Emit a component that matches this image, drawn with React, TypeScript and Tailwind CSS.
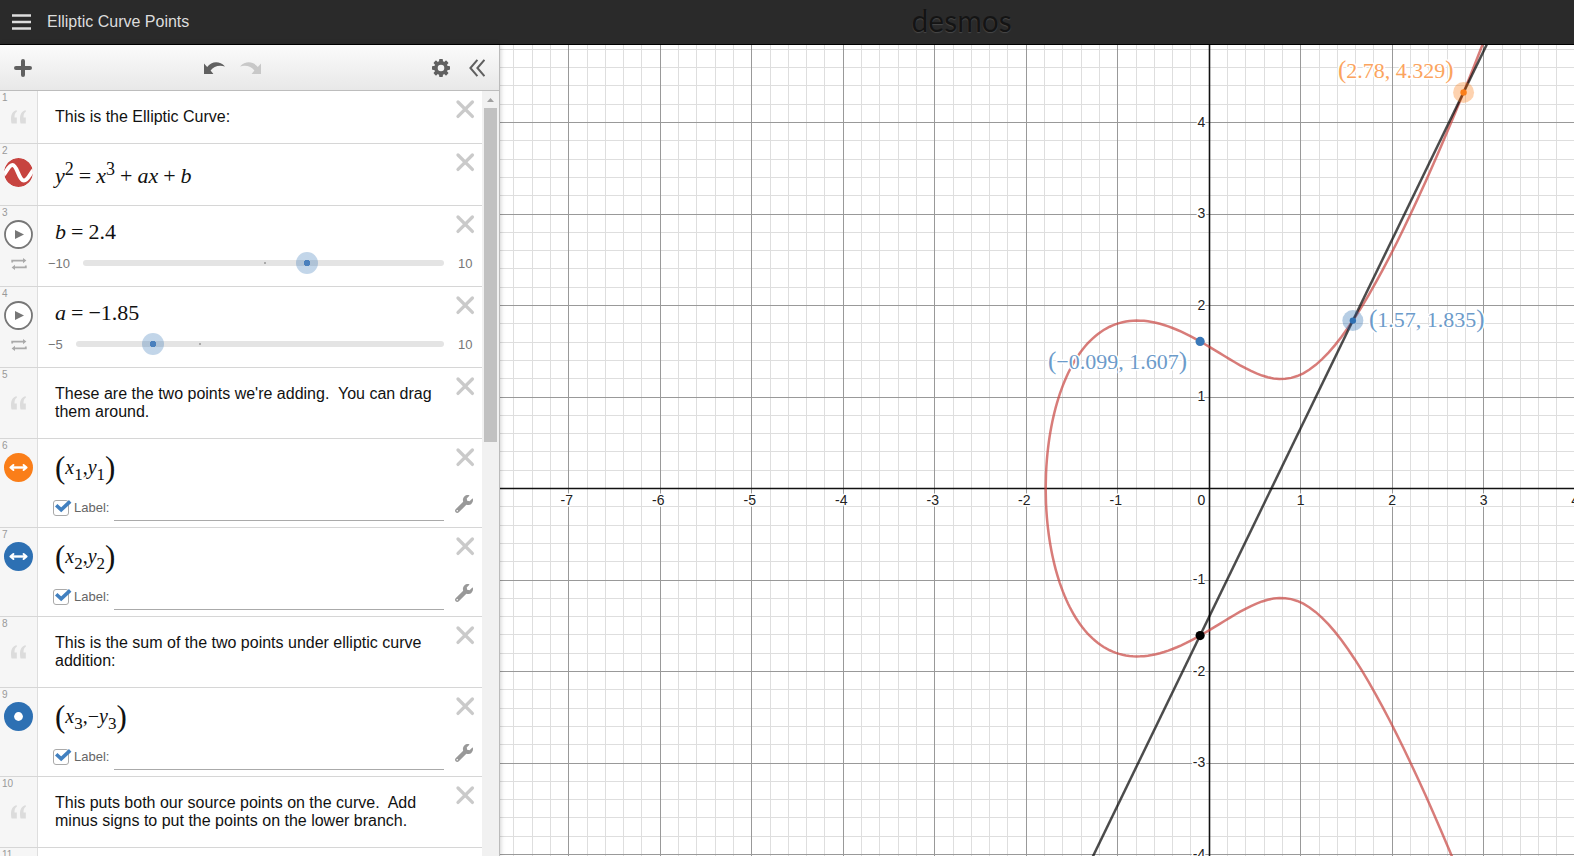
import React from 'react';
import { FaWrench } from 'react-icons/fa';
import { clsx } from 'clsx';

const RED = '#c74440';
const BLUE = '#2d70b3';
const ORANGE = '#fa7e19';

/* ---------- icons ---------- */

function CloseIcon() {
  return (
    <svg className="h-5 w-5" viewBox="0 0 20 20" fill="none" stroke="#cacaca" strokeWidth="3.3" strokeLinecap="round">
      <path d="M3 3 17.4 17.4M17.4 3 3 17.4" />
    </svg>
  );
}

function GearIcon() {
  const teeth = [0, 45, 90, 135, 180, 225, 270, 315];
  return (
    <svg className="h-[18px] w-[18px]" viewBox="-9 -9 18 18">
      {teeth.map((angle) => (
        <rect key={angle} x="-1.9" y="-9" width="3.8" height="5" rx="0.8" fill="#606060" transform={`rotate(${angle})`} />
      ))}
      <circle r="5.1" fill="none" stroke="#606060" strokeWidth="3.6" />
    </svg>
  );
}

function UndoIcon() {
  return (
    <svg className="h-3 w-[21px]" viewBox="0 0 21 12" fill="currentColor">
      <path d="M0 1.6 L0 12 L9.4 12 L6.6 8.6 C9.6 4.6 14.6 2.6 21 4.4 C15.6 -1.4 7.4 -0.8 3.2 5 Z" />
    </svg>
  );
}

function QuoteIcon() {
  return (
    <svg className="h-[14px] w-[15px]" viewBox="0 0 15 14" fill="#dcdcdc">
      <path d="M5.8 0.2 V1.8 C4.2 2.6 3.5 4.2 3.5 7.4 H5.8 V13.6 H0.6 C0.2 12.4 0 10.6 0 8.8 C0 4 1.8 0.8 5.8 0.2 Z" />
      <path d="M14.8 0.2 V1.8 C13.2 2.6 12.5 4.2 12.5 7.4 H14.8 V13.6 H9.6 C9.2 12.4 9 10.6 9 8.8 C9 4 10.8 0.8 14.8 0.2 Z" />
    </svg>
  );
}

function CurveIcon() {
  return (
    <svg className="h-[29px] w-[29px]" viewBox="0 0 29 29">
      <clipPath id="curve-clip">
        <circle cx="14.5" cy="14.5" r="14.5" />
      </clipPath>
      <g clipPath="url(#curve-clip)">
        <circle cx="14.5" cy="14.5" r="14.5" fill={RED} />
        <path
          d="M-1 17.5 C2 15 4.5 7 8.6 7 C13 7 15 22.6 20 22.6 C24 22.6 26.5 14.5 30 11.5"
          fill="none"
          stroke="#fff"
          strokeWidth="4"
        />
      </g>
    </svg>
  );
}

function DragIcon({ color }: { color: string }) {
  return (
    <svg className="h-[29px] w-[29px]" viewBox="0 0 29 29">
      <circle cx="14.5" cy="14.5" r="14.5" fill={color} />
      <path d="M8 14.5 H21" stroke="#fff" strokeWidth="2.4" />
      <path
        d="M9.4 12 L6.4 14.5 L9.4 17 M19.6 12 L22.6 14.5 L19.6 17"
        fill="#fff"
        stroke="#fff"
        strokeWidth="2"
        strokeLinecap="round"
        strokeLinejoin="round"
      />
    </svg>
  );
}

function PointIcon({ color }: { color: string }) {
  return (
    <svg className="h-[29px] w-[29px]" viewBox="0 0 29 29">
      <circle cx="14.5" cy="14.5" r="14.5" fill={color} />
      <circle cx="14.5" cy="14.5" r="4.4" fill="#fff" />
    </svg>
  );
}

function PlayIcon() {
  return (
    <svg className="h-[29px] w-[29px]" viewBox="0 0 29 29">
      <circle cx="14.5" cy="14.5" r="13.5" fill="#fff" stroke="#777" strokeWidth="1.8" />
      <path d="M11 10 V19 L20 14.5 Z" fill="#777" />
    </svg>
  );
}

function LoopIcon() {
  return (
    <svg className="h-3 w-4" viewBox="0 0 16 12" fill="none" stroke="#aaa" strokeWidth="1.8">
      <path d="M1.2 4.6 V2.6 H13" />
      <path d="M14.8 7.4 V9.4 H3" />
      <path d="M12 0 L15.4 2.6 L12 5.2 Z M4 6.8 L0.6 9.4 L4 12 Z" fill="#aaa" stroke="none" />
    </svg>
  );
}

/* ---------- math ---------- */

function Op({ children }: { children: React.ReactNode }) {
  return <span className="mx-[5px]">{children}</span>;
}

function Sup({ children }: { children: React.ReactNode }) {
  return <span className="align-[8px] text-[18px] leading-[0px]">{children}</span>;
}

function Sub({ children }: { children: React.ReactNode }) {
  return <span className="align-[-6px] text-[17px] leading-[0px]">{children}</span>;
}

function Coordinates({ children }: { children: React.ReactNode }) {
  return (
    <div className="flex h-10 items-center font-['Liberation_Serif',serif] text-[#111]">
      <span className="text-[31px] leading-none">(</span>
      <span className="whitespace-nowrap text-[20px] leading-none">{children}</span>
      <span className="text-[31px] leading-none">)</span>
    </div>
  );
}

/* ---------- expression rows ---------- */

interface RowProps {
  index: number;
  icon?: React.ReactNode;
  label: string;
  children?: React.ReactNode;
  tools?: React.ReactNode;
}

function Row({ index, icon, label, children, tools }: RowProps) {
  return (
    <li className="flex shrink-0 border-b border-[#d6d6d6] bg-white">
      <div className="relative flex w-[38px] shrink-0 flex-col items-center border-r border-[#dedede] bg-[#f6f6f6] pt-[14px]">
        <span className="absolute left-[2px] top-[2px] text-[10px] leading-[10px] text-[#999]">{index}</span>
        {icon}
      </div>
      <div className="min-w-0 flex-1">{children}</div>
      <div className="flex w-[38px] shrink-0 flex-col items-end justify-between pb-[14px] pr-[7px] pt-2">
        <button type="button" aria-label={`Delete ${label}`}>
          <CloseIcon />
        </button>
        {tools}
      </div>
    </li>
  );
}

function NoteRow({ index, text }: { index: number; text: string }) {
  return (
    <Row
      index={index}
      label={`note ${index}`}
      icon={
        <span className="flex flex-1 items-center pb-[14px]">
          <QuoteIcon />
        </span>
      }
    >
      <p className="whitespace-pre-wrap py-[17px] pl-[17px] text-base leading-[18px] text-[#111]">{text}</p>
    </Row>
  );
}

interface SliderRowProps {
  index: number;
  name: string;
  value: number;
  min: number;
  max: number;
}

function SliderRow({ index, name, value, min, max }: SliderRowProps) {
  const [current, setCurrent] = React.useState(value);
  const format = (n: number) => String(n).replace('-', '−');

  return (
    <Row
      index={index}
      label={name}
      icon={
        <>
          <button type="button" aria-label={`Play ${name}`}>
            <PlayIcon />
          </button>
          <button type="button" className="mt-[9px]" aria-label={`Loop mode for ${name}`}>
            <LoopIcon />
          </button>
        </>
      }
    >
      <div className="flex h-20 flex-col pt-[14px]">
        <div className="pl-[17px] font-['Liberation_Serif',serif] text-[22px] leading-6 text-[#111]">
          <i>{name}</i>
          <Op>=</Op>
          {format(current)}
        </div>
        <div className="mt-2 flex items-center text-[13px] leading-5 text-[#777]">
          <span className="pl-[10px] pr-[13px] pt-[2px]">{format(min)}</span>
          <div className="relative h-1.5 flex-1 rounded-full bg-[#e4e4e4]">
            <span
              className="absolute top-[2px] h-[2px] w-[2px] bg-[#aaa]"
              style={{ left: `${(-min / (max - min)) * 100}%` }}
            />
            <input
              type="range"
              aria-label={name}
              min={min}
              max={max}
              step={0.01}
              value={current}
              onChange={(e) => setCurrent(Number(e.target.value))}
              className="absolute -left-[11px] -top-2 m-0 h-[22px] w-[calc(100%+22px)] cursor-pointer appearance-none bg-transparent [&::-webkit-slider-thumb]:h-[22px] [&::-webkit-slider-thumb]:w-[22px] [&::-webkit-slider-thumb]:appearance-none [&::-webkit-slider-thumb]:rounded-full [&::-webkit-slider-thumb]:bg-[radial-gradient(circle,#4a80bd_0_3px,#2d70b34a_3px)]"
            />
          </div>
          <span className="-mr-7 w-7 pl-[14px] pt-[2px]">{max}</span>
        </div>
      </div>
    </Row>
  );
}

interface PointRowProps {
  index: number;
  name: string;
  icon: React.ReactNode;
  children: React.ReactNode;
}

function PointRow({ index, name, icon, children }: PointRowProps) {
  const [checked, setChecked] = React.useState(true);

  return (
    <Row
      index={index}
      label={name}
      icon={<button type="button" aria-label={`Toggle ${name}`}>{icon}</button>}
      tools={
        <button type="button" className="mr-[2px]" aria-label={`Settings for ${name}`}>
          <FaWrench className="h-[18px] w-[18px] text-[#999]" />
        </button>
      }
    >
      <div className="h-[88px] pl-[17px] pt-2">
        <Coordinates>{children}</Coordinates>
        <div className="-ml-[2px] mt-2 flex items-center">
          <label className="flex items-center text-[13px] leading-[26px] text-[#666]">
            <span className="relative h-4 w-4">
              <input
                type="checkbox"
                checked={checked}
                onChange={(e) => setChecked(e.target.checked)}
                className="block h-4 w-4 appearance-none rounded-[3px] border border-[#aaa] bg-white"
              />
              <svg
                className={clsx('pointer-events-none absolute left-[2px] top-0', !checked && 'hidden')}
                width="17"
                height="14"
                viewBox="0 0 17 14"
                fill="none"
                stroke="#4180c0"
                strokeWidth="3.6"
              >
                <path d="M1.2 5.2 L6.2 9.8 L15.2 1.4" />
              </svg>
            </span>
            <span className="ml-[5px]">Label:</span>
          </label>
          <input
            type="text"
            aria-label={`Label text for ${name}`}
            className="ml-[5px] h-[26px] min-w-0 flex-1 border-b border-[#aaa] bg-transparent text-[13px] outline-none"
          />
        </div>
      </div>
    </Row>
  );
}

function ExpressionList() {
  return (
    <ul className="flex min-w-0 flex-1 flex-col overflow-hidden">
      <NoteRow index={1} text="This is the Elliptic Curve:" />
      <Row index={2} label="elliptic curve" icon={<button type="button" aria-label="Toggle curve"><CurveIcon /></button>}>
        <div className="h-[61px] whitespace-nowrap pl-[17px] pt-5 font-['Liberation_Serif',serif] text-[22px] leading-6 text-[#111]">
          <i>y</i>
          <Sup>2</Sup>
          <Op>=</Op>
          <i>x</i>
          <Sup>3</Sup>
          <Op>+</Op>
          <i>ax</i>
          <Op>+</Op>
          <i>b</i>
        </div>
      </Row>
      <SliderRow index={3} name="b" value={2.4} min={-10} max={10} />
      <SliderRow index={4} name="a" value={-1.85} min={-5} max={10} />
      <NoteRow index={5} text="These are the two points we're adding.  You can drag them around." />
      <PointRow index={6} name="first point" icon={<DragIcon color={ORANGE} />}>
        <i>x</i><Sub>1</Sub>,<i>y</i><Sub>1</Sub>
      </PointRow>
      <PointRow index={7} name="second point" icon={<DragIcon color={BLUE} />}>
        <i>x</i><Sub>2</Sub>,<i>y</i><Sub>2</Sub>
      </PointRow>
      <NoteRow index={8} text="This is the sum of the two points under elliptic curve addition:" />
      <PointRow index={9} name="sum point" icon={<PointIcon color={BLUE} />}>
        <i>x</i><Sub>3</Sub>,−<i>y</i><Sub>3</Sub>
      </PointRow>
      <NoteRow index={10} text="This puts both our source points on the curve.  Add minus signs to put the points on the lower branch." />
      <NoteRow index={11} text="" />
    </ul>
  );
}

function Sidebar() {
  return (
    <aside className="z-10 flex w-[500px] shrink-0 flex-col border-r border-[#bbb] bg-white shadow-[0_0_5px_rgba(0,0,0,0.25)]">
      <div className="flex h-[46px] shrink-0 items-center border-b border-[#bdbdbd] bg-linear-to-b from-[#fbfbfb] to-[#e8e8e8] px-[14px] text-[#606060]">
        <button type="button" aria-label="Add item">
          <svg className="h-[18px] w-[18px]" viewBox="0 0 18 18" stroke="#606060" strokeWidth="4" strokeLinecap="round">
            <path d="M9 2 V16 M2 9 H16" />
          </svg>
        </button>
        <div className="flex flex-1 justify-center gap-[15px]">
          <button type="button" aria-label="Undo">
            <UndoIcon />
          </button>
          <button type="button" aria-label="Redo" className="-scale-x-100 text-[#c8c8c8]" disabled>
            <UndoIcon />
          </button>
        </div>
        <button type="button" aria-label="Graph settings">
          <GearIcon />
        </button>
        <button type="button" aria-label="Hide list" className="ml-[19px]">
          <svg className="h-[18px] w-4" viewBox="0 0 16 18" fill="none" stroke="#606060" strokeWidth="2">
            <path d="M8.4 0.8 L1.4 9 L8.4 17.2 M15.4 0.8 L8.4 9 L15.4 17.2" />
          </svg>
        </button>
      </div>
      <div className="flex min-h-0 flex-1">
        <ExpressionList />
        <div className="flex w-[17px] shrink-0 flex-col items-center bg-[#f1f1f1]">
          <button type="button" aria-label="Scroll up" className="flex h-[17px] w-full items-center justify-center">
            <svg className="h-1 w-[7px]" viewBox="0 0 7 4" fill="#a0a0a0">
              <path d="M0 4 L3.5 0 L7 4 Z" />
            </svg>
          </button>
          <div className="h-[334px] w-[13px] bg-[#c1c1c1]" />
        </div>
      </div>
    </aside>
  );
}

/* ---------- graph ---------- */

const UNIT = 91.5;
const ORIGIN = { x: 709.2, y: 443.5 };
const A = -1.85;
const B = 2.4;
const ROOT = -1.7935;
const EXTENT = 4000;

const px = (x: number) => ORIGIN.x + x * UNIT;
const py = (y: number) => ORIGIN.y - y * UNIT;
const snap = (n: number) => Math.floor(n) + 0.5;

const range = (from: number, to: number) => Array.from({ length: to - from + 1 }, (_, i) => from + i);

function curvePath() {
  const upper: string[] = [];
  const lower: string[] = [];
  for (let t = 0; t <= 2.4; t += 0.02) {
    const x = ROOT + t * t;
    const y = Math.sqrt(Math.max(0, x ** 3 + A * x + B));
    upper.unshift(`${px(x).toFixed(2)} ${py(y).toFixed(2)}`);
    lower.push(`${px(x).toFixed(2)} ${py(-y).toFixed(2)}`);
  }
  return `M${upper.join('L')}L${lower.join('L')}`;
}

interface PointLabelProps {
  x: number;
  y: number;
  color: string;
  children: string;
}

function PointLabel({ x, y, color, children }: PointLabelProps) {
  return (
    <text
      x={x}
      y={y}
      fill={color}
      stroke="#fff"
      strokeWidth="3"
      strokeLinejoin="round"
      paintOrder="stroke"
      className="font-['Liberation_Serif',serif] text-[22px]"
    >
      <tspan className="text-[25px]">(</tspan>
      {children}
      <tspan className="text-[25px]">)</tspan>
    </text>
  );
}

function Graph() {
  const slope = (4.329 - 1.835) / (2.78 - 1.57);
  const lineY = (x: number) => 1.835 + slope * (x - 1.57);
  const xLabels = [-7, -6, -5, -4, -3, -2, -1, 1, 2, 3, 4];
  const yLabels = [-4, -3, -2, -1, 1, 2, 3, 4];

  return (
    <main className="min-w-0 flex-1 overflow-hidden bg-white">
      <svg className="block h-full w-full" role="img" aria-label="Graph of the elliptic curve">
        <g stroke="#dedede">
          {range(-60, 120).map((i) => (
            <line key={`mx${i}`} x1={snap(px(i / 5))} x2={snap(px(i / 5))} y1="0" y2={EXTENT} />
          ))}
          {range(-100, 40).map((i) => (
            <line key={`my${i}`} y1={snap(py(i / 5))} y2={snap(py(i / 5))} x1="0" x2={EXTENT} />
          ))}
        </g>
        <g stroke="#999">
          {range(-12, 24).map((i) => (
            <line key={`Mx${i}`} x1={snap(px(i))} x2={snap(px(i))} y1="0" y2={EXTENT} />
          ))}
          {range(-20, 8).map((i) => (
            <line key={`My${i}`} y1={snap(py(i))} y2={snap(py(i))} x1="0" x2={EXTENT} />
          ))}
        </g>
        <g stroke="#111" strokeWidth="1.6">
          <line x1={snap(px(0))} x2={snap(px(0))} y1="0" y2={EXTENT} />
          <line y1={snap(py(0))} y2={snap(py(0))} x1="0" x2={EXTENT} />
        </g>

        <g
          className="font-['Liberation_Sans',Arial,sans-serif] text-[14px]"
          fill="#222"
          stroke="#fff"
          strokeWidth="3"
          strokeLinejoin="round"
          paintOrder="stroke"
        >
          {xLabels.map((n) => (
            <text key={n} x={px(n) - (n < 0 ? 2 : 0)} y={py(0) + 16} textAnchor="middle">{n}</text>
          ))}
          {yLabels.map((n) => (
            <text key={n} x={px(0) - 4} y={py(n) + 4} textAnchor="end">{n}</text>
          ))}
          <text x={px(0) - 4} y={py(0) + 16} textAnchor="end">0</text>
        </g>

        <path d={curvePath()} fill="none" stroke={RED} strokeOpacity="0.7" strokeWidth="2.5" />
        <line
          x1={px(-4)}
          y1={py(lineY(-4))}
          x2={px(8)}
          y2={py(lineY(8))}
          stroke="#000"
          strokeOpacity="0.7"
          strokeWidth="2.5"
        />

        <circle cx={px(2.78)} cy={py(4.329)} r="10.5" fill={ORANGE} fillOpacity="0.35" />
        <circle cx={px(2.78)} cy={py(4.329)} r="3.2" fill={ORANGE} />
        <circle cx={px(1.57)} cy={py(1.835)} r="10.5" fill={BLUE} fillOpacity="0.35" />
        <circle cx={px(1.57)} cy={py(1.835)} r="3.2" fill={BLUE} />
        <circle cx={px(-0.099)} cy={py(1.607)} r="4.6" fill="#3a78b8" />
        <circle cx={px(-0.099)} cy={py(-1.607)} r="4.6" fill="#000" />

        <PointLabel x={838} y={33} color="#fba45e">2.78, 4.329</PointLabel>
        <PointLabel x={869} y={282} color="#6c9bca">1.57, 1.835</PointLabel>
        <PointLabel x={548} y={324} color="#6c9bca">−0.099, 1.607</PointLabel>
      </svg>
    </main>
  );
}

export default function App() {
  return (
    <div className="flex h-screen flex-col overflow-hidden bg-white font-['Liberation_Sans',Arial,sans-serif]">
      <header className="flex h-[45px] shrink-0 items-center border-b border-black bg-[#2a2a2a]">
        <div className="flex min-w-max grow-[8] basis-0 items-center gap-4 pl-3">
          <button type="button" aria-label="Open menu">
            <svg className="h-4 w-[19px]" viewBox="0 0 19 16" stroke="#ddd" strokeWidth="2.4">
              <path d="M0 1.5 H19 M0 8 H19 M0 14.5 H19" />
            </svg>
          </button>
          <h1 className="text-base leading-5 text-[#ddd]">Elliptic Curve Points</h1>
        </div>
        <a
          href="#"
          className="pb-1 font-[Lato,sans-serif] text-[30px] leading-10 text-[#141414] [text-shadow:0_1px_1px_#484848]"
        >
          desmos
        </a>
        <div className="grow-[5] basis-0" />
      </header>
      <div className="flex min-h-0 flex-1">
        <Sidebar />
        <Graph />
      </div>
    </div>
  );
}
